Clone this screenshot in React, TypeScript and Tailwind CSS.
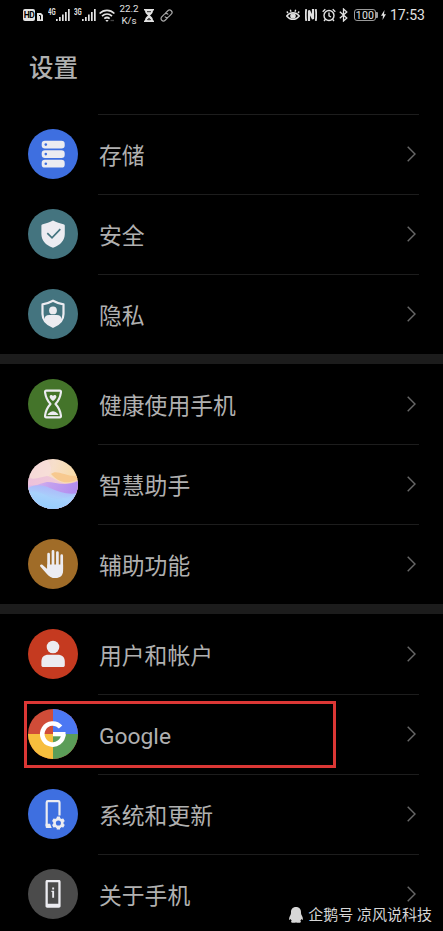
import type { ReactNode } from 'react';
import { clsx } from 'clsx';

type Item = { label: string; icon: ReactNode; highlighted?: boolean };

const FG = '#ececf1';

const Disc = ({ color, children }: { color: string; children: ReactNode }) => (
  <svg viewBox="0 0 50 50" className="w-[50px] h-[50px] shrink-0" fill="none">
    <circle cx="25" cy="25" r="25" fill={color} />
    {children}
  </svg>
);

const StorageIcon = () => (
  <Disc color="#3e6fe0">
    {[11.7, 21.2, 30.8].map((y) => (
      <g key={y}>
        <rect x="13.7" y={y} width="23" height="7.8" rx="3.2" fill={FG} />
        <circle cx="17.8" cy={y + 3.9} r="1.3" fill="#3e6fe0" />
      </g>
    ))}
  </Disc>
);

const SecurityIcon = () => (
  <Disc color="#44747f">
    <path d="M25 11.6c3.6 1.9 7 3.1 10.4 3.6.9.1 1.4.7 1.4 1.6V25c0 6.600-4.600 11-11.100 13.600a2 2 0 0 1-1.400 0C17.800 36 13.400 31.600 13.400 25v-8.200c0-.9.5-1.500 1.400-1.600C18.200 14.700 21.500 13.500 25 11.600z" fill={FG} />
    <path d="M19.300 24.200l4.700 4.600 8.300-8.600" stroke="#44747f" strokeWidth="1.700" />
  </Disc>
);

const PrivacyIcon = () => (
  <Disc color="#44747f">
    <path d="M25 11.700c3.500 1.900 6.800 3.100 10.500 3.700V25c0 6.200-4.200 10.200-10.500 12.800C18.700 35.200 14.500 31.200 14.500 25v-9.600c3.700-.6 7-1.800 10.500-3.700z" stroke={FG} strokeWidth="2.200" strokeLinejoin="round" />
    <circle cx="25" cy="21.400" r="3.900" fill={FG} />
    <path d="M16.400 30.500c.2-2.900 1.900-4.400 4.800-4.400h7.600c2.900 0 4.600 1.500 4.800 4.400-1.800 3.700-5.300 5.900-8.600 7.300-3.300-1.400-6.800-3.600-8.600-7.300z" fill={FG} />
  </Disc>
);

const BalanceIcon = () => (
  <Disc color="#44742a">
    <path d="M18.500 11.600h13c1.300 0 1.600.8 1.400 2-.7 4.800-2.400 8.200-5.400 11.400 3 3.200 4.700 6.600 5.400 11.400.2 1.200-.1 2-1.400 2h-13c-1.300 0-1.600-.8-1.400-2 .7-4.800 2.400-8.200 5.400-11.400-3-3.200-4.700-6.600-5.400-11.400-.2-1.200.1-2 1.400-2z" stroke={FG} strokeWidth="2.200" strokeLinejoin="round" />
    <path d="M25 22c-2-1.700-3.400-2.700-3.400-4.300 0-1.900 2.400-2.300 3.400-.7 1-1.600 3.400-1.200 3.400.7 0 1.600-1.400 2.600-3.400 4.300z" fill={FG} />
    <path d="M19.500 36c.6-2 2.400-2.400 3.500-3.200 1.200-.9 2.800-.9 4 0 1.100.8 2.900 1.200 3.500 3.200z" fill={FG} />
  </Disc>
);

const AssistantIcon = () => (
  <svg viewBox="0 0 50 50" className="w-[50px] h-[50px] shrink-0">
    <defs>
      <clipPath id="orb"><circle cx="25" cy="25" r="25" /></clipPath>
      <linearGradient id="sky" x1="0" y1="0" x2="1" y2="0.3">
        <stop offset="0" stopColor="#efcbd0" />
        <stop offset="0.5" stopColor="#f7dfcb" />
        <stop offset="1" stopColor="#f8dba4" />
      </linearGradient>
      <linearGradient id="haze" x1="0" y1="0" x2="1" y2="0.3">
        <stop offset="0" stopColor="#edc0dc" />
        <stop offset="0.6" stopColor="#f0cad6" />
        <stop offset="1" stopColor="#eeb8c8" />
      </linearGradient>
      <linearGradient id="violet" x1="0" y1="0" x2="1" y2="0.2">
        <stop offset="0" stopColor="#e2bcea" />
        <stop offset="0.45" stopColor="#c3a0ee" />
        <stop offset="1" stopColor="#b18cf0" />
      </linearGradient>
      <linearGradient id="sea" x1="0.75" y1="0" x2="0.35" y2="1">
        <stop offset="0" stopColor="#b1aef8" />
        <stop offset="0.5" stopColor="#a9cdfb" />
        <stop offset="1" stopColor="#8fc8fc" />
      </linearGradient>
    </defs>
    <g clipPath="url(#orb)">
      <rect width="50" height="50" fill="url(#sky)" />
      <circle cx="11" cy="10" r="12" fill="#f8dfdf" opacity="0.6" />
      <path d="M0 19c8 2 13-1 19-2 7 1 10 6 17 7 6 1 10-1 14-3v30H0z" fill="url(#haze)" />
      <path d="M23 15c6-5 14 3 27 2v3c-9 5-18 5-27-5z" fill="#f7c98f" />
      <path d="M0 26c8 2 12-2 19-3 9 0 18 5 31-1v28H0z" fill="url(#violet)" />
      <path d="M0 29c8-4 15-3 22 0 9 4 18 7 28 5v16H0z" fill="url(#sea)" />
      <path d="M0 34c9-5 16 2 24 5 10 2 18-1 26-6v18H0z" fill="#a5dcff" opacity="0.3" />
    </g>
  </svg>
);

const AccessibilityIcon = () => (
  <Disc color="#a06c28">
    <path d="M20.600 15.200V29M25 12.300V29M29.400 13.500V29M33.700 16.700V30" stroke={FG} strokeWidth="2.700" strokeLinecap="round" />
    <path d="M19.200 25.500h15.900v6.300c0 4.700-3 7.300-7.600 7.300-4 0-6.300-1.500-8.600-4.200l-6.600-7.500c-.9-1.200.7-2.400 2.100-1.600l4.800 4.100z" fill={FG} />
  </Disc>
);

const UserIcon = () => (
  <Disc color="#c53a20">
    <circle cx="25" cy="18" r="6.300" fill={FG} />
    <path d="M20.500 25.700h9c4.700 0 7.300 2.600 7.300 7v3.300c0 1.500-.7 2.100-2.100 2.100H15.500c-1.400 0-2.100-.6-2.100-2.100v-3.300c0-4.400 2.500-7 7.100-7z" fill={FG} />
  </Disc>
);

const GoogleIcon = () => (
  <Disc color="#d04c38">
    <path d="M25 0a25 25 0 0 1 25 25H25z" fill="#4c78f3" />
    <path d="M50 25a25 25 0 0 1-25 25V25z" fill="#5b9d58" />
    <path d="M25 50A25 25 0 0 1 0 25h25z" fill="#f7be3d" />
    <path d="M32.600 18A10.500 10.500 0 1 0 35.300 25" stroke="#fff" strokeWidth="4.600" />
    <path d="M25 23h12.500v4.300H25z" fill="#fff" />
  </Disc>
);

const SystemIcon = () => (
  <Disc color="#3e6fe0">
    <path d="M31.500 26.500V13.500c0-.8-.5-1.300-1.300-1.300H20c-.8 0-1.300.5-1.300 1.300V37" stroke={FG} strokeWidth="2.200" />
    <path d="M17.600 34.700h4.500l1.600 4.300h-4.500c-1 0-1.600-.6-1.600-1.600z" fill={FG} />
    <circle cx="30.400" cy="34" r="3.900" stroke={FG} strokeWidth="2.700" />
    {[0, 60, 120, 180, 240, 300].map((a) => (
      <rect key={a} x="28.700" y="27.500" width="3.400" height="2.700" rx="0.600" fill={FG} transform={`rotate(${a} 30.4 34)`} />
    ))}
  </Disc>
);

const AboutIcon = () => (
  <Disc color="#4b4b4b">
    <path fillRule="evenodd" d="M19.200 11h11.700c1 0 1.700.7 1.700 1.700V37c0 1-.7 1.700-1.700 1.700H19.200c-1 0-1.700-.7-1.700-1.700V12.700c0-1 .7-1.700 1.700-1.700zm.6 2.300v21.400h10.500V13.300z" fill={FG} />
    <path d="M24.200 18.600h1.900v1.900h-1.900zM23.400 21.800h2.700v7h-1.900V23h-.8z" fill={FG} />
  </Disc>
);

const groups: Item[][] = [
  [
    { label: '存储', icon: <StorageIcon /> },
    { label: '安全', icon: <SecurityIcon /> },
    { label: '隐私', icon: <PrivacyIcon /> },
  ],
  [
    { label: '健康使用手机', icon: <BalanceIcon /> },
    { label: '智慧助手', icon: <AssistantIcon /> },
    { label: '辅助功能', icon: <AccessibilityIcon /> },
  ],
  [
    { label: '用户和帐户', icon: <UserIcon /> },
    { label: 'Google', icon: <GoogleIcon />, highlighted: true },
    { label: '系统和更新', icon: <SystemIcon /> },
    { label: '关于手机', icon: <AboutIcon /> },
  ],
];

const Signal = ({ label }: { label: string }) => (
  <div className="flex w-[22px] h-[14px]">
    <span className="w-[8px] text-[8.5px] leading-[8px] font-bold origin-left scale-x-[0.72]">{label}</span>
    <svg viewBox="0 0 14 14" className="w-[14px] h-[14px] shrink-0" fill="currentColor">
      <path d="M0 11h1.700v2H0zM3 9h1.700v4H3zM6 6.500h1.700V13H6zM9 4h1.700v9H9zM12 1h1.700v12H12z" />
    </svg>
  </div>
);

const StatusBar = () => (
  <div className="flex items-center h-[30px] shrink-0 pl-[23px] pr-[18px] text-[#e2e2e2]">
    <span className="w-[12px] h-[12px] rounded-[2px] bg-[#e2e2e2] text-black text-[8.5px] leading-[12px] font-bold text-center tracking-[-0.4px]">HD</span>
    <svg viewBox="0 0 6 8" className="w-[6px] h-[8px] ml-[2px] mt-[4px]">
      <path d="M0 0h4l2 2v6H0z" fill="currentColor" />
      <path d="M2 2.500h1.500V6.500" stroke="#000" fill="none" />
    </svg>
    <div className="ml-[5px] flex gap-[4px]">
      <Signal label="4G" />
      <Signal label="3G" />
    </div>
    <svg viewBox="0 0 16 13" className="w-[16px] h-[13px] ml-[3px]" fill="none" stroke="currentColor" strokeWidth="1.700">
      <path d="M.6 4.500c4.300-4.200 10.500-4.200 14.800 0M3 7.200c3-2.800 7-2.800 10 0M5.300 9.700c1.700-1.500 3.700-1.500 5.400 0" />
      <path d="M6.300 11h3.400L8 13z" fill="currentColor" stroke="none" />
      <path d="M11.500 11.500h3.500" stroke="#444" strokeWidth="1.300" />
    </svg>
    <div className="w-[22px] ml-[3px] text-center text-[9.8px] leading-[12px]">
      <div>22.2</div>
      <div>K/s</div>
    </div>
    <svg viewBox="0 0 10 13" className="w-[10px] h-[13px] ml-[4px]" fill="currentColor">
      <path d="M0 0h10v1.500H0zM0 11.500h10V13H0zM1 1.500h8C9 4 7.500 5.300 6 6.500 7.500 7.700 9 9 9 11.500H1C1 9 2.500 7.700 4 6.500 2.500 5.300 1 4 1 1.500z" />
      <path d="M3 2.700h4M3.500 10.700L5 9.200l1.500 1.500z" stroke="#000" strokeWidth="0.800" />
    </svg>
    <svg viewBox="0 0 24 24" className="w-[13px] h-[13px] ml-[6px] text-[#a9a9a9]" fill="none" stroke="currentColor" strokeWidth="2.200" strokeLinecap="round">
      <path d="M9.500 14.500a4.500 4.500 0 0 0 6.300 0l5-5a4.450 4.450 0 0 0-6.300-6.300l-4 4" />
      <path d="M14.500 9.500a4.500 4.500 0 0 0-6.300 0l-5 5a4.450 4.450 0 0 0 6.300 6.300l4-4" />
    </svg>

    <div className="flex items-center ml-auto">
      <svg viewBox="0 0 14 12" className="w-[14px] h-[12px]" fill="none" stroke="currentColor" strokeWidth="1.400">
        <path d="M.7 7c3.500-4.300 9.100-4.300 12.600 0-3.500 4.500-9.100 4.500-12.600 0zM2 4L.8 2.500M5 2.700L4.300.8M9 2.700l.7-1.900M12 4l1.200-1.500" />
        <circle cx="7" cy="7" r="2.100" fill="currentColor" />
      </svg>
      <svg viewBox="0 0 12 14" className="w-[12px] h-[14px] ml-[5px]" fill="none" stroke="currentColor">
        <path d="M1.200 1.200c-.5 3.500-.5 8 0 11.600M10.800 1.200c.5 3.500.5 8 0 11.600" strokeWidth="1.800" />
        <path d="M4 13V2.500l4 8.500V1" strokeWidth="2.200" />
      </svg>
      <svg viewBox="0 0 14 14" className="w-[14px] h-[14px] ml-[5px]" fill="none" stroke="currentColor" strokeWidth="1.400">
        <circle cx="7" cy="7.500" r="5" />
        <path d="M7 4.500v3.300l2 1.200M.7 3.700l2.600-2.400M13.300 3.700l-2.600-2.400M3.500 11.300L2 13M10.500 11.300L12 13" />
      </svg>
      <svg viewBox="0 0 9 14" className="w-[9px] h-[14px] ml-[3px]" fill="none" stroke="currentColor" strokeWidth="1.300">
        <path d="M.8 3.700l7 6.300-3.300 3V1l3.300 3-7 6.300" />
      </svg>
      <div className="flex items-center ml-[6px]">
        <span className="w-[22px] h-[12px] border border-[#9a9a9a] rounded-[3px] text-[10.5px] leading-[11px] text-center tracking-[0.2px]">100</span>
        <span className="w-[2px] h-[6px] bg-[#9a9a9a] rounded-r-[1px]" />
      </div>
      <svg viewBox="0 0 5 10" className="w-[5px] h-[10px] ml-[3px]" fill="currentColor">
        <path d="M3.500 0L0 5.700h2L1.500 10 5 4.300H3z" />
      </svg>
      <span className="w-[35px] ml-[4px] text-[14px] leading-[16px] whitespace-nowrap">17:53</span>
    </div>
  </div>
);

const Row = ({ item, divider }: { item: Item; divider: boolean }) => (
  <div className="relative flex h-[80px] shrink-0 pl-[28px] pr-[24px]">
    <div className="flex items-center w-[70px]">{item.icon}</div>
    <div className={clsx('flex flex-1 items-center justify-between border-t pb-px', divider ? 'border-[#1d1d1d]' : 'border-transparent')}>
      <span className="pl-px pt-[5px] text-[22.8px] leading-[32px]">{item.label}</span>
      <svg viewBox="0 0 9 16" className="w-[9px] h-[16px] mr-[3px]" fill="none" stroke="#666" strokeWidth="1.500">
        <path d="M.7.700L8 8l-7.300 7.300" />
      </svg>
    </div>
    {item.highlighted && (
      <div className="absolute left-[24px] top-[7px] w-[312px] h-[67px] border-[3px] border-[#dc3735]" />
    )}
  </div>
);

export default function App() {
  return (
    <div className="relative flex flex-col w-[443px] h-[931px] overflow-hidden bg-black text-[#b0b0b0] font-[Roboto,'Noto_Sans_CJK_SC',sans-serif]">
      <StatusBar />
      <h1 className="h-[83px] shrink-0 pl-[29px] pt-[21px] text-[24.5px] leading-[36px] font-medium">设置</h1>

      {groups.map((items, g) => (
        <section key={g} className={clsx('shrink-0', g === 0 ? 'pt-px' : 'border-t-[10px] border-[#1c1c1c]')}>
          {items.map((item, i) => (
            <Row key={item.label} item={item} divider={g === 0 || i > 0} />
          ))}
        </section>
      ))}

      {/* Publisher watermark */}
      <div className="absolute right-[11px] bottom-[5px] flex items-center text-[15px] leading-[22px] text-[#d6d6d6] whitespace-nowrap">
        <svg viewBox="0 0 14 16" className="w-[14px] h-[16px] mr-[5px]" fill="currentColor">
          <path d="M7 0c3.300 0 5 2.200 5 5.200 0 1.600.2 2.200.8 3.400.9 1.500 1.300 3.100 1 4-.3.600-1 .2-1.500-.5-.2.700-.6 1.300-1 1.700.9.500 1 1.700-.4 1.900-1.500.3-2.900 0-3.900-.2-1 .2-2.400.5-3.900.2-1.400-.2-1.300-1.400-.4-1.900-.4-.4-.8-1-1-1.700-.5.700-1.200 1.100-1.500.5-.3-.9.100-2.500 1-4C1.800 7.400 2 6.800 2 5.200 2 2.200 3.700 0 7 0z" />
        </svg>
        企鹅号&nbsp;凉风说科技
      </div>
    </div>
  );
}
